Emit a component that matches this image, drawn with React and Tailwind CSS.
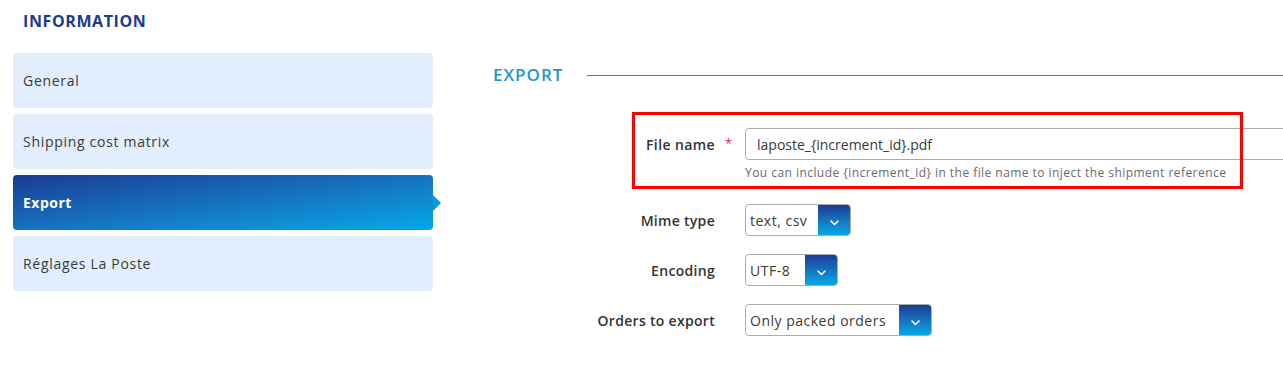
import React from "react";

function Chevron() {
  return (
    <svg width="9" height="6" viewBox="0 0 9 6" className="mt-[6px]">
      <path d="M1 1 L4.5 4.5 L8 1" fill="none" stroke="#ffffff" strokeWidth="1.6" strokeLinecap="round" strokeLinejoin="round" />
    </svg>
  );
}

function Select({ value, textW }) {
  return (
    <div className="flex h-[32px] border border-[#ababab] rounded-[4px] overflow-hidden bg-white">
      <div className={`flex items-center pl-[4px] text-[14px] text-[#3a3a3a] tracking-[0.5px] ${textW}`}>{value}</div>
      <div className="w-[32px] bg-linear-to-b from-[#1b3c95] to-[#00a8e8] flex items-center justify-center">
        <Chevron />
      </div>
    </div>
  );
}

function NavItem({ label, active }) {
  if (active) {
    return (
      <div className="relative h-[55px] rounded-[4px] bg-linear-to-br from-[#1a3b93] to-[#00a9ea] flex items-center pl-[10px] text-[14px] font-bold text-white tracking-[0.5px]">
        {label}
        <span className="absolute right-[-8px] top-[20px] w-0 h-0 border-y-[8px] border-y-transparent border-l-[8px] border-l-[#0699dc]" />
      </div>
    );
  }
  return (
    <div className="h-[55px] rounded-[4px] bg-[#e2eefe] flex items-center pl-[10px] text-[14px] text-[#3a3a3a] tracking-[0.7px]">
      {label}
    </div>
  );
}

function Row({ label, children }) {
  return (
    <div className="flex items-center">
      <div className="w-[222px] shrink-0 text-right text-[14px] font-semibold text-[#333333] tracking-[0.3px]">{label}</div>
      <div className="w-[30px] shrink-0" />
      {children}
    </div>
  );
}

export default function App() {
  return (
    <div className="w-[1283px] h-[374px] overflow-hidden bg-white font-['Open_Sans',sans-serif]">
      <h2 className="pl-[23px] pt-[11px] h-[53px] text-[16px] leading-[20px] font-bold text-[#1d3990] tracking-[0.6px]">INFORMATION</h2>
      <div className="flex">
        <nav className="ml-[13px] w-[420px] shrink-0 flex flex-col gap-[6px]">
          <NavItem label="General" />
          <NavItem label="Shipping cost matrix" />
          <NavItem label="Export" active />
          <NavItem label="Réglages La Poste" />
        </nav>
        <main className="ml-[60px] flex-1 min-w-0 pt-[12px]">
          <div className="flex items-center h-[20px]">
            <h3 className="text-[17px] font-semibold text-[#2293d5] leading-[20px] tracking-[1px]">EXPORT</h3>
            <div className="ml-[24px] flex-1 h-[1px] bg-[#1b8ccf]" />
          </div>
          <div className="relative mt-[43px]">
            <div className="flex items-center">
              <div className="w-[222px] shrink-0 text-right text-[14px] font-semibold text-[#333333] tracking-[0.4px]">File name</div>
              <div className="w-[30px] shrink-0 pl-[10px] text-[13px] text-[#e0245e]">*</div>
              <div className="h-[32px] w-[600px] shrink-0 border border-[#ababab] rounded-l-[4px] flex items-center pl-[11px] text-[14px] text-[#3a3a3a]">
                laposte_{"{increment_id}"}.pdf
              </div>
            </div>
            <div className="pl-[252px] mt-[5px] text-[12px] leading-[16px] text-[#6b6b6b] tracking-[0.45px]">
              You can include {"{increment_id}"} in the file name to inject the shipment reference
            </div>
            <div className="absolute left-[139px] top-[-16px] w-[611px] h-[77px] border-[3px] border-[#ff0000] pointer-events-none" />
          </div>
          <div className="mt-[23px] flex flex-col gap-[18px]">
            <Row label="Mime type">
              <Select value="text, csv" textW="w-[72px]" />
            </Row>
            <Row label="Encoding">
              <Select value="UTF-8" textW="w-[59px]" />
            </Row>
            <Row label="Orders to export">
              <Select value="Only packed orders" textW="w-[153px]" />
            </Row>
          </div>
        </main>
      </div>
    </div>
  );
}
